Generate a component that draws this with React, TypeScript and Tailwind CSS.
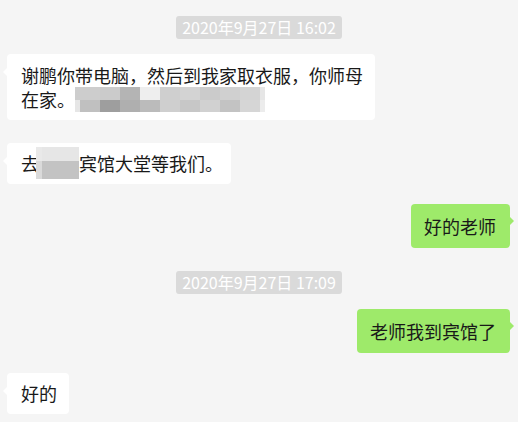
import React from "react";

const font = "font-['Noto_Sans_CJK_SC','Noto_Sans',sans-serif]";

// pixelated (mosaic) cover blocks, row by row
const mosaicA = [
  ["bg-[#cdcdcd]", "bg-[#cdcdcd]", "bg-[#cbcbcb]", "bg-[#b4b4b4]", "bg-[#eeeeee]", "bg-[#cfcfcf]", "bg-[#d3d3d3]", "bg-[#cbcbcb]", "bg-[#d0d0d0]", "bg-[#d4d4d4]", "bg-[#e6e6e6]"],
  ["bg-[#e6e6e6]", "bg-[#c0c0c0]", "bg-[#9e9e9e]", "bg-[#afafaf]", "bg-[#bbbbbb]", "bg-[#cfcfcf]", "bg-[#c7c7c7]", "bg-[#d1d1d1]", "bg-[#c3c3c3]", "bg-[#d6d6d6]", "bg-[#ececec]"],
];

const mosaicB = [
  ["bg-[#e9e9e9]", "bg-[#e6e6e6]"],
  ["bg-[#dadada]", "bg-[#c3c3c3]"],
];

function Time({ text, className }: { text: string; className?: string }) {
  return (
    <div className={`flex justify-center ${className ?? ""}`}>
      <span className={`h-[23px] px-[6px] rounded-[3px] bg-[#dadada] text-white text-[16px] leading-[23px] whitespace-nowrap ${font}`}>
        {text}
      </span>
    </div>
  );
}

function Left({ children, className }: { children: React.ReactNode; className?: string }) {
  return (
    <div className={`flex justify-start pl-[7px] ${className ?? ""}`}>
      <div className={`relative bg-white rounded-[4px] pl-[14px] pr-[12px] py-[8.5px] max-w-[368px] text-[18px] leading-[24px] text-[#191919] ${font}`}>
        <span className="absolute left-[-4px] top-[14px] w-0 h-0 border-y-[4px] border-y-transparent border-r-[4px] border-r-white" />
        {children}
      </div>
    </div>
  );
}

function Right({ children, className }: { children: React.ReactNode; className?: string }) {
  return (
    <div className={`flex justify-end pr-[8px] ${className ?? ""}`}>
      <div className={`relative bg-[#9eea6a] rounded-[4px] pl-[13px] pr-[14px] py-[10px] text-[18px] leading-[24px] text-[#191919] whitespace-nowrap ${font}`}>
        <span className="absolute right-[-4px] top-[13px] w-0 h-0 border-y-[4px] border-y-transparent border-l-[4px] border-l-[#9eea6a]" />
        {children}
      </div>
    </div>
  );
}

export default function App() {
  return (
    <div className="w-[518px] h-[422px] overflow-hidden bg-[#f5f5f5] pt-[16px]">
      <Time text="2020年9月27日 16:02" />

      <Left className="mt-[15px]">
        谢鹏你带电脑，然后到我家取衣服，你师母在家。
        <span className="inline-grid align-top grid-cols-[5px_repeat(9,20px)_5px] grid-rows-[13px_12px] mt-[0.5px] -mb-[1px]">
          {mosaicA.flat().map((c, i) => (
            <span key={i} className={c} />
          ))}
        </span>
      </Left>

      <Left className="mt-[23px]">
        <span className="inline-block whitespace-nowrap -mr-[4px]">
          去
          <span className="inline-grid align-top grid-cols-[6px_37px] grid-rows-[14px_18px] h-[32px] -mt-[4px] -mb-[4px] -ml-[3px]">
            {mosaicB.flat().map((c, i) => (
              <span key={i} className={c} />
            ))}
          </span>
          宾馆大堂等我们。
        </span>
      </Left>

      <Right className="mt-[20px]">好的老师</Right>

      <Time text="2020年9月27日 17:09" className="mt-[23px]" />

      <Right className="mt-[15px]">老师我到宾馆了</Right>

      <Left className="mt-[20px]">
        <span className="whitespace-nowrap">好的</span>
      </Left>
    </div>
  );
}
